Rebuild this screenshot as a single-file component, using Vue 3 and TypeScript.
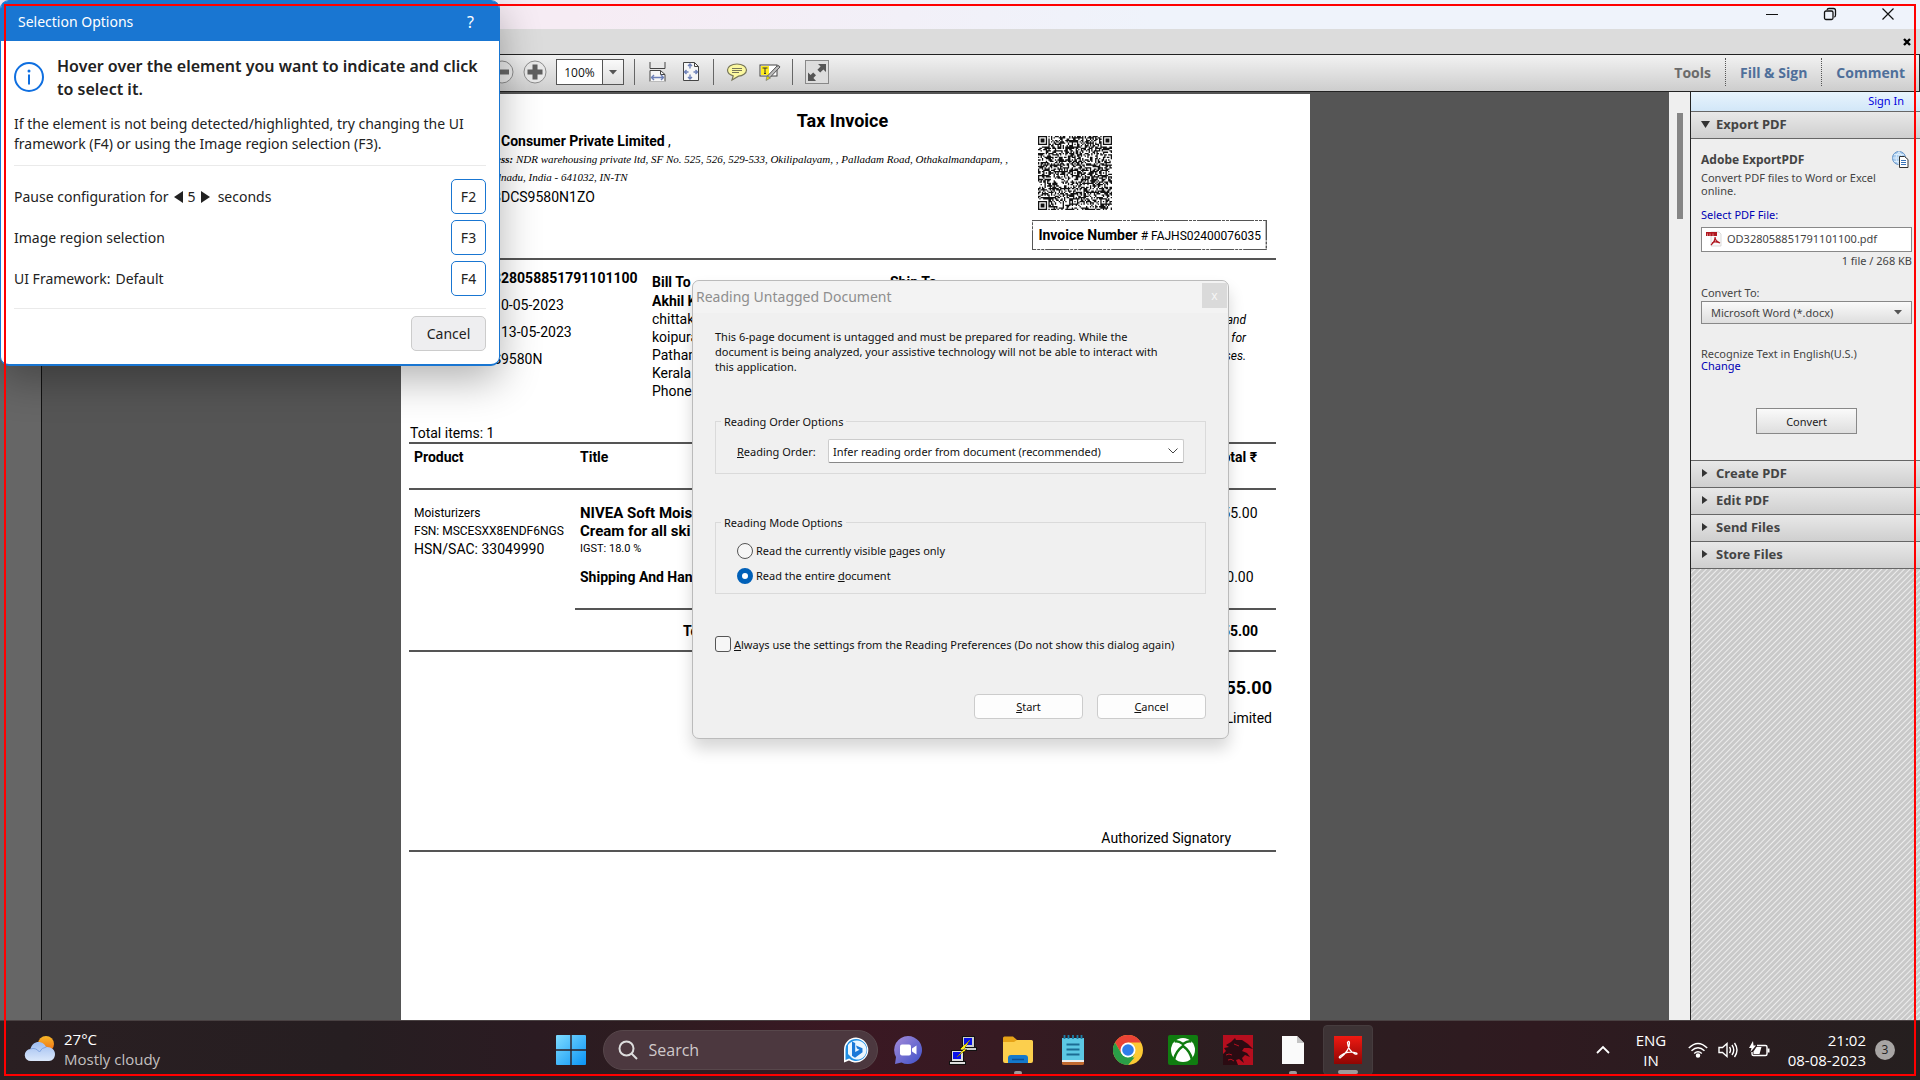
<script setup lang="ts">
import { ref } from 'vue'

const zoomLevel = ref('100%')
const readingMode = ref('entire')
const pauseSeconds = ref(5)
const skipDialog = ref(false)

const shortcuts = ['F2', 'F3', 'F4']
const collapsedTools = ['Create PDF', 'Edit PDF', 'Send Files', 'Store Files']

// Version 10 code: 57 modules with finder and alignment patterns.
const QR_SIZE = 57
function buildQrPath(): string {
  let seed = 20230513
  const next = () => {
    seed = (seed * 1103515245 + 12345) % 2147483648
    return seed / 2147483648
  }
  const grid: boolean[][] = []
  for (let y = 0; y < QR_SIZE; y++) {
    const row: boolean[] = []
    for (let x = 0; x < QR_SIZE; x++) row.push(next() > 0.48)
    grid.push(row)
  }
  const stamp = (cx: number, cy: number, reach: number, light: number[]) => {
    for (let dy = -reach; dy <= reach; dy++) {
      for (let dx = -reach; dx <= reach; dx++) {
        const x = cx + dx
        const y = cy + dy
        if (x < 0 || y < 0 || x >= QR_SIZE || y >= QR_SIZE) continue
        grid[y][x] = !light.includes(Math.max(Math.abs(dx), Math.abs(dy)))
      }
    }
  }
  for (const cy of [6, 28, 50]) for (const cx of [6, 28, 50]) stamp(cx, cy, 2, [1])
  stamp(3, 3, 4, [2, 4])
  stamp(QR_SIZE - 4, 3, 4, [2, 4])
  stamp(3, QR_SIZE - 4, 4, [2, 4])
  let d = ''
  grid.forEach((row, y) => row.forEach((on, x) => { if (on) d += `M${x} ${y}h1v1h-1z` }))
  return d
}
const qrPath = buildQrPath()
</script>

<template>
  <div class="desktop">
    <div class="app">
      <header class="titlebar">
        <button class="winbtn" aria-label="Minimize"><svg width="14" height="14" viewBox="0 0 14 14"><path d="M1 7.500h12" stroke="#111" fill="none" /></svg></button>
        <button class="winbtn" aria-label="Restore"><svg width="14" height="14" viewBox="0 0 14 14" fill="none" stroke="#111" stroke-width="1.300"><rect x="1.500" y="4" width="8.500" height="8.500" rx="1.500" /><path d="M4 2.800Q4.300 1.500 6 1.500h4.500q2 0 2 2V8q0 1.800-1.200 2" /></svg></button>
        <button class="winbtn" aria-label="Close"><svg width="14" height="14" viewBox="0 0 14 14"><path d="M1.500 1.500l11 11M12.500 1.500l-11 11" stroke="#111" stroke-width="1.200" /></svg></button>
      </header>
      <div class="tabstrip">
        <button class="tabclose" aria-label="Close document"><svg width="8" height="8" viewBox="0 0 8 8"><path d="M1 1l6 6M7 1L1 7" stroke="#000" stroke-width="2.400" /></svg></button>
      </div>

      <div class="toolbar">
        <div class="tools-left">
          <button class="round" aria-label="Zoom out"><svg width="24" height="24" viewBox="0 0 24 24"><circle cx="12" cy="12" r="11" fill="#e9e9e9" stroke="#8c8c8c" /><path d="M5 12h14" stroke="#666" stroke-width="5" /></svg></button>
          <button class="round" aria-label="Zoom in"><svg width="24" height="24" viewBox="0 0 24 24"><circle cx="12" cy="12" r="11" fill="#e9e9e9" stroke="#8c8c8c" /><path d="M4.500 12h15M12 4.500v15" stroke="#5f5f5f" stroke-width="5" /></svg></button>
          <div class="zoom">
            <input v-model="zoomLevel" type="text" aria-label="Zoom level">
            <button aria-label="Zoom presets"><svg width="8" height="5" viewBox="0 0 8 5"><path d="M0 0h8L4 4.500z" fill="#555" /></svg></button>
          </div>
          <i class="sep"></i>
          <button class="tool" aria-label="Fit width"><svg width="18" height="22" viewBox="0 0 18 22" fill="none" stroke="#444"><path d="M1 1v6.500h15V1" fill="#e8e8e8" /><path d="M1 20.500V9.500h10.500l4.500 4v7" fill="#f6f6f6" /><path d="M11.500 9.500v4H16" /><path d="M1 20.500h15" stroke="#bbb" /><path d="M2.500 16.500h12M5 14l-2.500 2.500L5 19M12 14l2.500 2.500L12 19" stroke="#6d80b8" stroke-width="1.400" /></svg></button>
          <button class="tool" aria-label="Fit page"><svg width="18" height="22" viewBox="0 0 18 22" fill="none" stroke="#444"><path d="M1.500 1.500h11l4 4v14h-15z" fill="#f6f6f6" /><path d="M12.500 1.500v4h4" /><path d="M8 3.500v4M6 5l2-2 2 2M8 17.500v-4M6 16l2 2 2-2M2.500 11h4M4.500 9l-2 2 2 2M15.500 11h-4M13.500 9l2 2-2 2" stroke="#6d80b8" stroke-width="1.400" /></svg></button>
          <i class="sep"></i>
          <button class="tool" aria-label="Add comment"><svg width="22" height="20" viewBox="0 0 22 20"><path d="M11 2c5.500 0 9.500 2.600 9.500 6s-4 6-8 6.200L6 18l1.200-4.200C3.500 12.800 1.500 10.700 1.500 8c0-3.400 4-6 9.500-6z" fill="#fbf8a0" stroke="#77765a" stroke-width="1.200" /><path d="M6 6.500h10M6 8.500h10M6 10.500h7" stroke="#77765a" /></svg></button>
          <button class="tool" aria-label="Highlight text"><svg width="22" height="20" viewBox="0 0 22 20"><rect x="1" y="3" width="17" height="11" fill="#fff" stroke="#444" /><rect x="2" y="4" width="8" height="9" fill="#ffed1f" /><path d="M3.500 6h5M6 6v5.500M5 11.500h2" stroke="#333" fill="none" /><path d="M8 14.500L18 4q2.500-1 3 1L11 15.500z" fill="#bbb" stroke="#555" /><path d="M8 14l3.500 2L7 18.500z" fill="#e5e000" stroke="#777" stroke-width=".7" /></svg></button>
          <i class="sep"></i>
          <button class="full" aria-label="Read mode"><svg width="20" height="20" viewBox="0 0 20 20" fill="#555"><path d="M11 2h8v8l-2.600-2.600-3.200 3.200-2.800-2.800 3.200-3.200zM1 10.500l2.600 2.600 2.600-2.600L9 13.300l-2.600 2.600L9 19H1z" /></svg></button>
        </div>
        <nav class="tools-right">
          <button class="on">Tools</button>
          <button>Fill &amp; Sign</button>
          <button>Comment</button>
        </nav>
      </div>

      <div class="workspace">
        <aside class="rail"></aside>
        <main class="canvas">
          <article class="invoice">
            <h1>Tax Invoice</h1>
            <div class="seller">
              <div class="seller-text">
                <p class="split"><span></span><span><b>Consumer Private Limited</b> ,</span></p>
                <p class="split addr"><b>Addre</b><span><b>ss:</b> NDR warehousing private ltd, SF No. 525, 526, 529-533, Okilipalayam, , Palladam Road, Othakalmandapam, ,</span></p>
                <p class="split addr"><span>l</span><span>nadu, India - 641032, IN-TN</span></p>
                <p class="split gst"><span>3</span><span>DCS9580N1ZO</span></p>
              </div>
              <div class="codes">
                <svg class="qr" width="74" height="74" viewBox="0 0 57 57"><path :d="qrPath" fill="#111" /></svg>
                <p class="number">
                  <svg aria-hidden="true"><rect width="100%" height="100%" fill="none" stroke="#555" stroke-width="2" stroke-dasharray="24 1 3 1 3 1" /></svg>
                  <b>Invoice Number</b> # FAJHS02400076035
                </p>
              </div>
            </div>
            <hr>
            <section class="parties">
              <div class="order">
                <p class="split"><b>3</b><b>28058851791101100</b></p>
                <p class="split"><span>1</span><span>0-05-2023</span></p>
                <p class="split"><span></span><span>13-05-2023</span></p>
                <p class="split"><span>S</span><span>9580N</span></p>
              </div>
              <div class="bill">
                <h2>Bill To</h2>
                <b>Akhil K</b>
                <p>chittak</p>
                <p>koipura</p>
                <p>Pathan</p>
                <p>Kerala</p>
                <p>Phone:</p>
              </div>
              <div class="ship"><h2>Ship To</h2></div>
              <div class="note"><p>and</p><p>for</p><p>ses.</p></div>
            </section>
            <p class="count">Total items: 1</p>
            <table>
              <thead>
                <tr><th class="c1">Product</th><th>Title</th><th class="amt">Total ₹</th></tr>
              </thead>
              <tbody>
                <tr class="item">
                  <td><small>Moisturizers</small><small>FSN: MSCESXX8ENDF6NGS</small>HSN/SAC: 33049990</td>
                  <td><strong>NIVEA Soft Mois</strong><strong>Cream for all ski</strong><em>IGST: 18.0 %</em></td>
                  <td class="amt">255.00</td>
                </tr>
                <tr class="shipping"><td></td><td><b>Shipping And Hand</b></td><td class="amt">40.00</td></tr>
                <tr class="total"><td></td><td><b>Total</b></td><td class="amt"><b>255.00</b></td></tr>
              </tbody>
            </table>
            <p class="grand">255.00</p>
            <p class="firm">Limited</p>
            <p class="sign">Authorized Signatory</p>
            <hr>
          </article>
        </main>
        <div class="scroll"><i></i></div>

        <aside class="panel">
          <div class="signin"><a href="#">Sign In</a></div>
          <button class="fold open"><svg width="9" height="7" viewBox="0 0 9 7"><path d="M0 0h9L4.500 7z" fill="#333" /></svg>Export PDF</button>
          <div class="export">
            <div class="export-head">
              <h3>Adobe ExportPDF</h3>
              <svg width="17" height="17" viewBox="0 0 17 17"><circle cx="7" cy="7" r="6.500" fill="#a9cdf0" stroke="#5e8ec4" /><path d="M.5 7h13M2 3.500h10M2 10.500h10M7 .5v13M7 .5q-6 6.500 0 13M7 .5q6 6.500 0 13" fill="none" stroke="#e6f2fc" stroke-width=".8" /><path d="M7.500 5.500h5l3.500 3v8H7.500z" fill="#fff" stroke="#333" /><path d="M9 9.500h5M9 11.500h5M9 13.500h5" stroke="#3a74b8" /></svg>
            </div>
            <p class="lead">Convert PDF files to Word or Excel online.</p>
            <a class="pick" href="#">Select PDF File:</a>
            <div class="file">
              <svg width="17" height="16" viewBox="0 0 17 16"><path d="M6 1h8l2 2v12H6z" fill="#fafafa" stroke="#ccc" stroke-width=".7" /><path d="M1 1h11v4H1z" fill="#b01820" /><path d="M2.500 5V2.500M5 5V2.500M8 5V2.500" stroke="#e8a0a0" stroke-width=".8" /><path d="M10 6q.5 4-4 8M10 6q0 4 5 6M7 11.500q3-1.500 8 .3" fill="none" stroke="#b01820" stroke-width="1.300" /></svg>
              <span>OD328058851791101100.pdf</span>
            </div>
            <p class="size">1 file / 268 KB</p>
            <label class="to" for="format">Convert To:</label>
            <div class="pickbox format">
              <select id="format"><option>Microsoft Word (*.docx)</option></select>
              <svg width="8" height="5" viewBox="0 0 8 5"><path d="M0 0h8L4 4.500z" fill="#555" /></svg>
            </div>
            <p class="ocr">Recognize Text in English(U.S.)</p>
            <a class="change" href="#">Change</a>
            <button class="convert">Convert</button>
          </div>
          <button v-for="t in collapsedTools" :key="t" class="fold"><svg width="9" height="8" viewBox="0 0 9 8"><path d="M1 0v8l5.500-4z" fill="#333" /></svg>{{ t }}</button>
          <div class="hatch"></div>
        </aside>
      </div>
    </div>

    <footer class="taskbar">
      <div class="weather">
        <svg width="32" height="28" viewBox="0 0 32 28">
          <defs>
            <linearGradient id="cloud" x1="0" y1="0" x2="0" y2="1"><stop offset="0" stop-color="#9dbcf0" /><stop offset="1" stop-color="#dbe8fb" /></linearGradient>
            <linearGradient id="sun" x1="0" y1="0" x2="0" y2="1"><stop offset="0" stop-color="#f8b728" /><stop offset="1" stop-color="#ef6a13" /></linearGradient>
          </defs>
          <circle cx="22" cy="9" r="8" fill="url(#sun)" />
          <path d="M7 26a6 6 0 0 1-.5-12C7.500 9.500 11 7 14.500 7c3.500 0 6.500 2.200 7.500 5 5-.5 9 2.500 9 7 0 4-2.500 7-6 7z" fill="url(#cloud)" />
          <path d="M6.500 14q5-2 9 3 2-4.500 7-5" fill="none" stroke="#7fa3e0" stroke-width="1" />
        </svg>
        <div><p>27°C</p><p class="dim">Mostly cloudy</p></div>
      </div>

      <div class="apps">
        <button class="tile start" aria-label="Start"><svg width="30" height="30" viewBox="0 0 30 30"><defs><linearGradient id="win" x1="0" y1="0" x2="1" y2="1"><stop offset="0" stop-color="#7fdcff" /><stop offset="1" stop-color="#0a93f5" /></linearGradient></defs><path d="M0 1q0-1 1-1h13.300v14.300H0zM15.700 0H29q1 0 1 1v13.300H15.700zM0 15.700h14.300V30H1q-1 0-1-1zM15.700 15.700H30V29q0 1-1 1H15.700z" fill="url(#win)" /></svg></button>
        <div class="search">
          <svg width="20" height="20" viewBox="0 0 20 20" fill="none" stroke="#ddd" stroke-width="2"><circle cx="8.500" cy="8.500" r="7" /><path d="M13.500 13.500l5.500 5.500" /></svg>
          <input type="text" placeholder="Search" aria-label="Search">
          <svg width="26" height="26" viewBox="0 0 26 26"><path d="M13 .5a12.500 12.500 0 1 1-7 23L1 25.500V13A12 12 0 0 1 13 .5z" fill="#fff" /><path d="M13 2a11 11 0 1 1-6.800 19.500L2.500 23V13A10.500 10.500 0 0 1 13 2z" fill="#1f8fe4" /><path d="M14 3.500a9.500 9.500 0 1 1-5 17.500L5 17V8A11 11 0 0 1 14 3.500z" fill="#eaf6ff" /><path d="M9 4.500l3.200 1.500v9l4.300-2.300-2.500-1.200-1-3 6.500 2.800v4L12 20.800l-3-2z" fill="#1a78d8" /></svg>
        </div>
        <button class="tile" aria-label="Chat"><svg width="30" height="30" viewBox="0 0 30 30"><defs><linearGradient id="chat" x1="0" y1="0" x2="1" y2="1"><stop offset="0" stop-color="#a58bd9" /><stop offset="1" stop-color="#3f51c9" /></linearGradient></defs><path d="M15 1a14 14 0 1 1-6.500 26.400L2 29l1-7A14 14 0 0 1 15 1z" fill="url(#chat)" /><rect x="7" y="9.500" width="11" height="11" rx="2" fill="#fff" /><path d="M19 13.500l4.500-3v9l-4.500-3z" fill="#fff" /></svg></button>
        <button class="tile" aria-label="PuTTY"><svg width="30" height="30" viewBox="0 0 30 30" shape-rendering="crispEdges"><path d="M14 1h12v11H14z" fill="#ccc" stroke="#111" /><path d="M16 3h8v7h-8z" fill="#0a12e8" /><path d="M12 12h16v3H12z" fill="#ccc" stroke="#111" /><path d="M3 15h12v11H3z" fill="#ddd" stroke="#111" /><path d="M5 17h8v7H5z" fill="#0a12e8" /><path d="M1 26h16v3H1z" fill="#ddd" stroke="#111" /><path d="M22 5l-10 9h4l-7 8 10-8h-3z" fill="#ffee10" stroke="#665500" stroke-width=".5" /></svg></button>
        <button class="tile" aria-label="File Explorer"><svg width="30" height="28" viewBox="0 0 30 28"><path d="M0 2q0-1.500 1.500-1.500H10L14 4v5H0z" fill="#e6a317" /><path d="M0 6h11l3-2h14.500Q30 4 30 5.500V25q0 2-2 2H2q-2 0-2-2z" fill="#fccf4d" /><path d="M5 27v-5q0-3 3-3h14q3 0 3 3v5z" fill="#1479cc" /><path d="M9 23.500h12" stroke="#0b4f94" stroke-width="1.500" /></svg><i class="dot"></i></button>
        <button class="tile" aria-label="Notepad"><svg width="24" height="30" viewBox="0 0 24 30"><path d="M1 27h22v1.500Q23 30 21 30H3q-2 0-2-1.500z" fill="#c1692f" /><path d="M1 3h22v24H1z" fill="#5cc8e4" /><path d="M1 25h22v2H1z" fill="#eee" /><path d="M3.500 0v4M7.500 0v4M12 0v4M16.500 0v4M20.500 0v4" stroke="#1b7fa8" stroke-width="1.800" /><path d="M5.500 9.500h13M5.500 14.500h13M5.500 19.500h13" stroke="#1c6c94" stroke-width="1.800" /></svg></button>
        <button class="tile" aria-label="Chrome"><svg width="30" height="30" viewBox="0 0 30 30"><circle cx="15" cy="15" r="15" fill="#fcc934" /><path d="M2 7.500A15 15 0 0 1 28 7.500H15L8.500 18.750z" fill="#ea4335" /><path d="M2 7.500L8.500 18.750 15 22.500h6.500L15 30A15 15 0 0 1 2 7.500z" fill="#2a9d47" /><path d="M15 30l6.500-11.250L15 22.500z" fill="#2a9d47" /><circle cx="15" cy="15" r="7.500" fill="#fff" /><circle cx="15" cy="15" r="5.800" fill="#2f7de9" /></svg></button>
        <button class="tile" aria-label="Xbox"><svg width="30" height="30" viewBox="0 0 30 30"><rect width="30" height="30" rx="2" fill="#107c10" /><circle cx="15" cy="15" r="12" fill="#fff" /><path d="M6.500 6.500Q10 5.500 15 9q5-3.500 8.500-2.500M6 24.500Q8 16 15 11q7 5 9 13.500" fill="none" stroke="#107c10" stroke-width="2.600" /></svg></button>
        <button class="tile" aria-label="Game"><svg width="30" height="30" viewBox="0 0 30 30"><rect width="30" height="30" fill="#b50e1e" /><path d="M3 10l5-3 4-4 1 2 6 0 6 4 3 3 2 2-4-1-5 0-2 3 5 2 3 4-5-2-3 3 2 5-5-4-3 1 2 5H0V19l3-3-2-3 5-1z" fill="#2b0b12" /><path d="M3 20q3-2 6 0M5 25q3-2 6 1M11 9l5 2" stroke="#b50e1e" fill="none" /></svg></button>
        <button class="tile" aria-label="Document"><svg width="22" height="28" viewBox="0 0 22 28"><path d="M0 0h15l7 7v21H0z" fill="#fafafa" /><path d="M15 0v7h7z" fill="#c4c4c4" /></svg><i class="dot"></i></button>
        <button class="tile active" aria-label="Adobe Reader"><svg width="28" height="28" viewBox="0 0 28 28"><defs><linearGradient id="pdf" x1="0" y1="0" x2="0" y2="1"><stop offset="0" stop-color="#f01a12" /><stop offset="1" stop-color="#8f0503" /></linearGradient></defs><rect width="28" height="28" fill="url(#pdf)" /><path d="M13.500 6.500q1.700-2.500 2 .5 0 8-9.500 15-2.500-1 4-4.500 6.500-2.500 12.500-.5 1.500 1.500-1.500 1Q14 14.500 13.500 6.500z" fill="none" stroke="#fff" stroke-width="1.300" /></svg><i class="dot wide"></i></button>
      </div>

      <div class="tray">
        <svg class="chev" width="14" height="9" viewBox="0 0 14 9"><path d="M1 8l6-6 6 6" fill="none" stroke="#fff" stroke-width="1.800" /></svg>
        <div class="lang"><p>ENG</p><p>IN</p></div>
        <div class="status">
          <svg width="20" height="16" viewBox="0 0 20 16" fill="none" stroke="#fff" stroke-width="1.500"><path d="M.8 6Q10-3 19.200 6M3.500 8.800q6.500-6 13 0M6.200 11.500q3.800-3.400 7.600 0" /><circle cx="10" cy="13.500" r="1.500" fill="#fff" /></svg>
          <svg width="21" height="18" viewBox="0 0 21 18" fill="none" stroke="#fff" stroke-width="1.400"><path d="M1 6.500h3.500L9 2.500v13L4.500 11.500H1zM11.500 6q2 3 0 6M14 4q3.500 5 0 10M16.500 2q5 7 0 14" /></svg>
          <svg width="21" height="17" viewBox="0 0 21 17"><path d="M8 4.500h8.500q1.500 0 1.500 1.500v7q0 1.500-1.500 1.500h-12Q3 14.500 3 13v-2" fill="none" stroke="#fff" stroke-width="1.400" /><path d="M18.500 7.500h2v4h-2z" fill="#fff" /><path d="M7.500 6h5l-2 7h-6v-2.500z" fill="#fff" /><path d="M4 0L0 7h2.500L1.500 11 7 4.500H4.500z" fill="#fff" /></svg>
        </div>
        <div class="clock"><p>21:02</p><p>08-08-2023</p></div>
        <span class="badge">3</span>
      </div>
    </footer>

    <section class="reading" role="dialog" aria-label="Reading Untagged Document">
      <header><span>Reading Untagged Document</span><button aria-label="Close">x</button></header>
      <div class="reading-body">
        <p class="intro">This 6-page document is untagged and must be prepared for reading. While the document is being analyzed, your assistive technology will not be able to interact with this application.</p>
        <fieldset class="f1">
          <legend>Reading Order Options</legend>
          <label for="order"><u>R</u>eading Order:</label>
          <div class="pickbox order-pick">
            <select id="order"><option>Infer reading order from document (recommended)</option></select>
            <svg width="10" height="6" viewBox="0 0 10 6"><path d="M.5.5L5 5 9.500.5" fill="none" stroke="#444" /></svg>
          </div>
        </fieldset>
        <fieldset class="f2">
          <legend>Reading Mode Options</legend>
          <label><input v-model="readingMode" type="radio" name="mode" value="visible"><span>Read the currently visible <u>p</u>ages only</span></label>
          <label><input v-model="readingMode" type="radio" name="mode" value="entire"><span>Read the entire <u>d</u>ocument</span></label>
        </fieldset>
        <label class="always"><input v-model="skipDialog" type="checkbox"><span><u>A</u>lways use the settings from the Reading Preferences (Do not show this dialog again)</span></label>
        <div class="actions"><button><u>S</u>tart</button><button><u>C</u>ancel</button></div>
      </div>
    </section>

    <section class="selection" role="dialog" aria-label="Selection Options">
      <header><span>Selection Options</span><button aria-label="Help">?</button></header>
      <div class="sel-body">
        <div class="hint">
          <svg width="30" height="30" viewBox="0 0 30 30"><circle cx="15" cy="15" r="14" fill="none" stroke="#0f6fe0" stroke-width="2" /><circle cx="15" cy="9" r="1.500" fill="#0f6fe0" /><path d="M15 12.500v10" stroke="#0f6fe0" stroke-width="2" /></svg>
          <h2>Hover over the element you want to indicate and click to select it.</h2>
        </div>
        <p class="help">If the element is not being detected/highlighted, try changing the UI framework (F4) or using the Image region selection (F3).</p>
        <div class="rows">
          <div>
            <span class="pause">Pause configuration for
              <button aria-label="Less" @click="pauseSeconds--"><svg width="9" height="12" viewBox="0 0 9 12"><path d="M9 0v12L0 6z" fill="#222" /></svg></button>
              {{ pauseSeconds }}
              <button aria-label="More" @click="pauseSeconds++"><svg width="9" height="12" viewBox="0 0 9 12"><path d="M0 0v12l9-6z" fill="#222" /></svg></button>
              <span class="unit">seconds</span></span>
            <button class="key">{{ shortcuts[0] }}</button>
          </div>
          <div><span>Image region selection</span><button class="key">{{ shortcuts[1] }}</button></div>
          <div><span class="fw"><span>UI Framework:</span><span>Default</span></span><button class="key">{{ shortcuts[2] }}</button></div>
        </div>
        <button class="cancel">Cancel</button>
      </div>
    </section>

    <div class="frame"></div>
  </div>
</template>

<style>
body { margin: 0; background: #2a1f22; }
</style>

<style scoped>
* { box-sizing: border-box; }
p, h1, h2, h3, fieldset, hr { margin: 0; padding: 0; }
button, input, select { font: inherit; color: inherit; margin: 0; padding: 0; border: 0; background: none; border-radius: 0; }
button { cursor: pointer; }
svg { display: block; flex: none; }
a { text-decoration: none; }

.desktop { position: relative; height: 100vh; display: flex; flex-direction: column; overflow: hidden; font-family: "Open Sans", "Noto Sans", sans-serif; font-size: 12px; }
.app { flex: 1; min-height: 0; display: flex; flex-direction: column; }
.titlebar { height: 29px; flex: none; display: flex; justify-content: flex-end; padding-right: 3px; background: linear-gradient(90deg, #f6ecf4 0, #f6ecf4 30%, #eff3fb 60%); }
.winbtn { width: 58px; height: 28px; display: flex; align-items: center; justify-content: center; }
.tabstrip { height: 25px; flex: none; display: flex; justify-content: flex-end; align-items: center; padding-right: 9px; background: #dcdcdc; }

.toolbar { height: 38px; flex: none; display: flex; justify-content: space-between; border-top: 1px solid #222; border-bottom: 1px solid #222; background: linear-gradient(#f2f2f2, #cdcdcd); }
.tools-left { display: flex; align-items: center; padding: 0 0 2px 490px; }
.round { width: 24px; margin-right: 9px; }
.zoom { display: flex; width: 68px; height: 26px; margin-right: 10px; border: 1px solid #555; background: #fff; }
.zoom input { width: 45px; text-align: center; font-size: 12px; color: #111; }
.zoom button { flex: 1; display: flex; align-items: center; justify-content: center; border-left: 1px solid #555; background: linear-gradient(#fafafa, #dedede); }
.sep { width: 1px; height: 26px; background: #666; margin-right: 12px; }
.tool { width: 22px; margin-right: 11px; display: flex; justify-content: center; }
.full { width: 24px; height: 24px; border: 1px solid #888; display: flex; align-items: center; justify-content: center; background: #ddd; }
.tools-right { display: flex; align-items: center; padding-bottom: 2px; border-right: 1px solid #222; }
.tools-right button { height: 28px; padding: 0 14px; font-size: 14px; font-weight: 700; color: #4f6f9a; border-left: 1px dotted #555; }
.tools-right .on { color: #6b6b6b; border-left: 0; }

.workspace { flex: 1; min-height: 0; display: flex; }
.rail { width: 42px; flex: none; background: #666; border-right: 1px solid #111; }
.canvas { flex: 1; min-width: 0; display: flex; justify-content: center; align-items: stretch; padding-top: 2px; background: #555; overflow: hidden; }
.invoice { width: 909px; flex: none; padding: 16px 34px 0 8px; background: #fff; color: #000; font-family: Roboto, "Liberation Sans", sans-serif; font-size: 14px; line-height: 18px; }
.invoice h1 { font-size: 18px; line-height: 22px; font-weight: 700; text-align: center; }
.invoice b, .invoice h2, .invoice th { font-size: 14px; font-weight: 700; }
.invoice hr { border: 0; height: 2px; background: #555; }
.seller { display: flex; height: 126px; }
.seller-text { flex: 1; min-width: 0; }
.split { display: grid; grid-template-columns: 92px auto; white-space: nowrap; }
.split > :first-child { text-align: right; }
.invoice .addr, .invoice .addr b { font-size: 11px; font-family: "Liberation Serif", serif; font-style: italic; }
.gst { line-height: 22px; }
.codes { flex: none; padding: 4px 9px 0 0; }
.qr { margin-left: 6px; }
.number { position: relative; height: 30px; margin-top: 10px; padding: 0 6px; font-size: 12px; line-height: 30px; white-space: nowrap; }
.number svg { position: absolute; inset: 0; width: 100%; height: 100%; }
.parties { display: grid; grid-template-columns: 243px 238px auto 1fr; height: 164px; }
.order { line-height: 27px; padding-top: 5px; }
.bill, .ship { padding-top: 13px; overflow: hidden; white-space: nowrap; }
.bill h2 { margin-bottom: 1px; }
.note { padding: 51px 30px 0 0; text-align: right; font-size: 12px; font-style: italic; }
.count { padding-left: 1px; }
table { width: 100%; border-spacing: 0; border-bottom: 2px solid #555; }
th, td { vertical-align: top; text-align: left; padding: 0 5px; }
th { height: 48px; padding-top: 4px; border-top: 2px solid #555; border-bottom: 2px solid #555; }
.c1 { width: 166px; }
.amt { width: 80px; text-align: center; }
.item td { height: 72px; padding-top: 14px; white-space: nowrap; }
small { display: block; font-size: 12px; }
strong { display: block; font-size: 15px; font-weight: 700; }
.item em { display: block; font-size: 11px; font-style: normal; }
.shipping td { height: 46px; padding-top: 6px; }
.total td { height: 42px; padding-top: 12px; }
.total td + td { border-top: 2px solid #555; padding-left: 108px; }
.total .amt { padding-left: 5px; }
.grand { padding: 25px 4px 10px 0; font-size: 18px; line-height: 22px; font-weight: 700; text-align: right; }
.firm { padding-right: 4px; text-align: right; }
.sign { padding: 102px 45px 3px 0; text-align: right; }
.scroll { width: 21px; flex: none; background: #efefef; padding: 21px 7px 0 8px; }
.scroll i { display: block; width: 6px; height: 106px; background: #858585; }

.panel { width: 230px; flex: none; display: flex; flex-direction: column; border-left: 1px solid #222; background: #eee; color: #444; font-family: "Noto Sans", sans-serif; font-size: 11px; }
.signin { height: 19px; flex: none; padding-right: 16px; line-height: 18px; text-align: right; background: linear-gradient(#e8f4fd, #d2e7f8); }
.signin a, .pick, .change { color: #0000b4; }
.signin a { color: #00d; }
.fold { flex: none; height: 27px; display: flex; align-items: center; gap: 6px; padding: 0 10px 2px; border-top: 1px solid #666; background: linear-gradient(#e8e8e8, #cfcfcf); font-size: 13px; font-weight: 700; }
.open { height: 28px; border-bottom: 1px solid #666; }
.export { flex: none; display: flex; flex-direction: column; align-items: flex-start; padding: 12px 8px 26px 10px; }
.export-head { width: 100%; display: flex; justify-content: space-between; padding-right: 3px; height: 20px; }
.export-head h3 { font-size: 12px; line-height: 18px; font-weight: 700; }
.lead { line-height: 13px; }
.pick { margin-top: 10px; line-height: 16px; }
.file { width: 100%; height: 25px; margin-top: 4px; display: flex; align-items: center; gap: 5px; padding: 0 3px 2px; border: 1px solid #888; background: #fff; }
.size { width: 100%; margin-top: 1px; text-align: right; line-height: 16px; }
.to { margin-top: 16px; line-height: 16px; }
.pickbox { position: relative; }
.pickbox select { width: 100%; height: 100%; appearance: none; }
.pickbox svg { position: absolute; right: 9px; top: 50%; margin-top: -3px; pointer-events: none; }
.format { width: 100%; height: 23px; border: 1px solid #888; background: linear-gradient(#fafafa, #dedede); }
.format select { padding-left: 9px; }
.ocr { margin-top: 24px; line-height: 12px; }
.change { line-height: 12px; }
.convert { align-self: center; width: 101px; height: 26px; margin-top: 36px; border: 1px solid #888; background: linear-gradient(#fafafa, #dedede); color: #222; font-size: 11px; }
.hatch { flex: 1; border-top: 1px solid #666; background: repeating-linear-gradient(135deg, #c9c9c9 0, #c9c9c9 2px, #ededed 3px, #c9c9c9 4px); }

.taskbar { height: 60px; flex: none; display: flex; align-items: center; padding-bottom: 2px; border-top: 1px solid #4a4243; background: linear-gradient(90deg, #2a1f22, #261e21 18%, #2b1b22 28%, #2d1c20 33%, #3b1823 44%, #361a22 52%, #2b1e20 65%, #2f1a20 80%, #251f1f); color: #fff; font-size: 15px; line-height: 20px; }
.weather { flex: 1; display: flex; align-items: center; gap: 8px; padding: 0 0 2px 24px; }
.dim { color: #c4c0c0; }
.apps { display: flex; gap: 5px; align-items: center; margin-right: 2px; }
.tile { position: relative; width: 50px; height: 50px; display: flex; align-items: center; justify-content: center; border-radius: 4px; }
.start { width: 53px; }
.active { background: #3d3335; border: 1px solid #463c3e; }
.dot { position: absolute; bottom: 0; left: 50%; width: 8px; height: 4px; margin-left: -4px; border-radius: 2px; background: #a09a9b; }
.wide { width: 20px; margin-left: -10px; }
.search { width: 275px; height: 40px; display: flex; align-items: center; gap: 11px; padding: 0 8px 0 14px; border-radius: 20px; border: 1px solid #57474b; background: #4c383f; }
.search input { flex: 1; min-width: 0; outline: none; font-size: 16px; }
.search input::placeholder { color: #d0c9cb; opacity: 1; }
.tray { flex: 1; display: flex; align-items: center; justify-content: flex-end; padding-right: 25px; }
.lang { width: 40px; margin: 0 17px 0 21px; text-align: center; }
.status { display: flex; align-items: center; gap: 10px; margin-right: 16px; }
.clock { width: 80px; white-space: nowrap; display: flex; flex-direction: column; align-items: flex-end; }
.weather p, .clock p, .lang p { line-height: 20px; }
.badge { width: 20px; height: 20px; margin-left: 9px; border-radius: 50%; background: #a8a5a4; color: #222; font-size: 12px; text-align: center; }

.reading { position: absolute; left: 50%; top: 280px; width: 537px; height: 459px; margin-left: -268px; border: 1px solid #bbb; border-radius: 7px; background: #f0f0f0; color: #111; font-family: "Noto Sans", sans-serif; font-size: 11px; line-height: 15px; box-shadow: 0 10px 16px rgba(0, 0, 0, .16); }
.reading header { height: 32px; display: flex; justify-content: space-between; padding: 2px 1px 0 3px; border-radius: 7px 7px 0 0; background: #f3f3f3; color: #8e8e8e; font-size: 14px; line-height: 28px; }
.reading header button { width: 25px; height: 25px; background: #dadada; color: #f6f6f6; font-size: 12px; line-height: 20px; }
.reading-body { padding: 16px 22px 0; }
.intro { height: 85px; padding-right: 30px; }
fieldset { border: 1px solid #dadada; min-width: 0; }
legend { padding: 0 3px; line-height: 15px; }
.f1 { display: flex; align-items: center; height: 60px; padding: 0 21px 0 5px; }
.f1 label { width: 107px; padding-left: 16px; }
.order-pick { flex: 1; height: 24px; border: 1px solid #ccc; border-bottom-color: #888; border-radius: 2px; background: #fff; }
.order-pick select { padding-left: 4px; }
.order-pick svg { right: 5px; }
.f2 { height: 79px; margin-top: 41px; padding: 8px 5px 0; }
.f2 label { display: flex; align-items: center; height: 25px; gap: 3px; padding-left: 16px; }
input[type="radio"], input[type="checkbox"] { appearance: none; width: 16px; height: 16px; flex: none; border: 1px solid #555; background: #f6f6f6; border-radius: 50%; }
input[type="radio"]:checked { border: 5px solid #0060b8; background: #fff; }
input[type="checkbox"] { border-radius: 3px; }
.always { display: flex; align-items: center; gap: 3px; margin-top: 42px; height: 16px; white-space: nowrap; }
.actions { display: flex; justify-content: flex-end; gap: 14px; margin-top: 42px; }
.actions button { width: 109px; height: 25px; border: 1px solid #ccc; border-radius: 4px; background: #fdfdfd; }

.selection { position: absolute; left: 0; top: 0; width: 500px; height: 366px; border: 1px solid #1976d2; border-bottom-width: 2px; border-radius: 9px; background: #fff; color: #222; font-family: "Noto Sans", sans-serif; font-size: 14px; line-height: 20px; box-shadow: 0 14px 40px rgba(0, 0, 0, .3); }
.selection header { height: 40px; display: flex; justify-content: space-between; padding: 2px 25px 0 17px; border-radius: 7px 7px 0 0; background: #1976d2; color: #fff; line-height: 38px; }
.selection header button { font-size: 16px; }
.sel-body { display: flex; flex-direction: column; padding: 14px 13px 0; }
.hint { display: flex; gap: 13px; height: 59px; }
.hint svg { margin-top: 7px; }
.hint h2 { font-size: 16px; line-height: 23px; font-weight: 600; }
.help { padding-bottom: 11px; border-bottom: 1px solid #eaeaea; }
.rows { display: flex; flex-direction: column; gap: 6px; padding: 13px 0 12px; border-bottom: 1px solid #eaeaea; }
.rows > div { display: flex; justify-content: space-between; align-items: center; }
.pause, .fw { display: flex; align-items: center; gap: 5px; }
.unit { padding-left: 3px; }
.key { width: 35px; height: 35px; border: 1px solid #1976d2; border-radius: 5px; }
.cancel { align-self: flex-end; width: 75px; height: 35px; margin-top: 7px; border: 1px solid #ccc; border-radius: 5px; background: #eeeef0; }

.frame { position: absolute; inset: 4px; border: 2px solid #f00; pointer-events: none; }
</style>
